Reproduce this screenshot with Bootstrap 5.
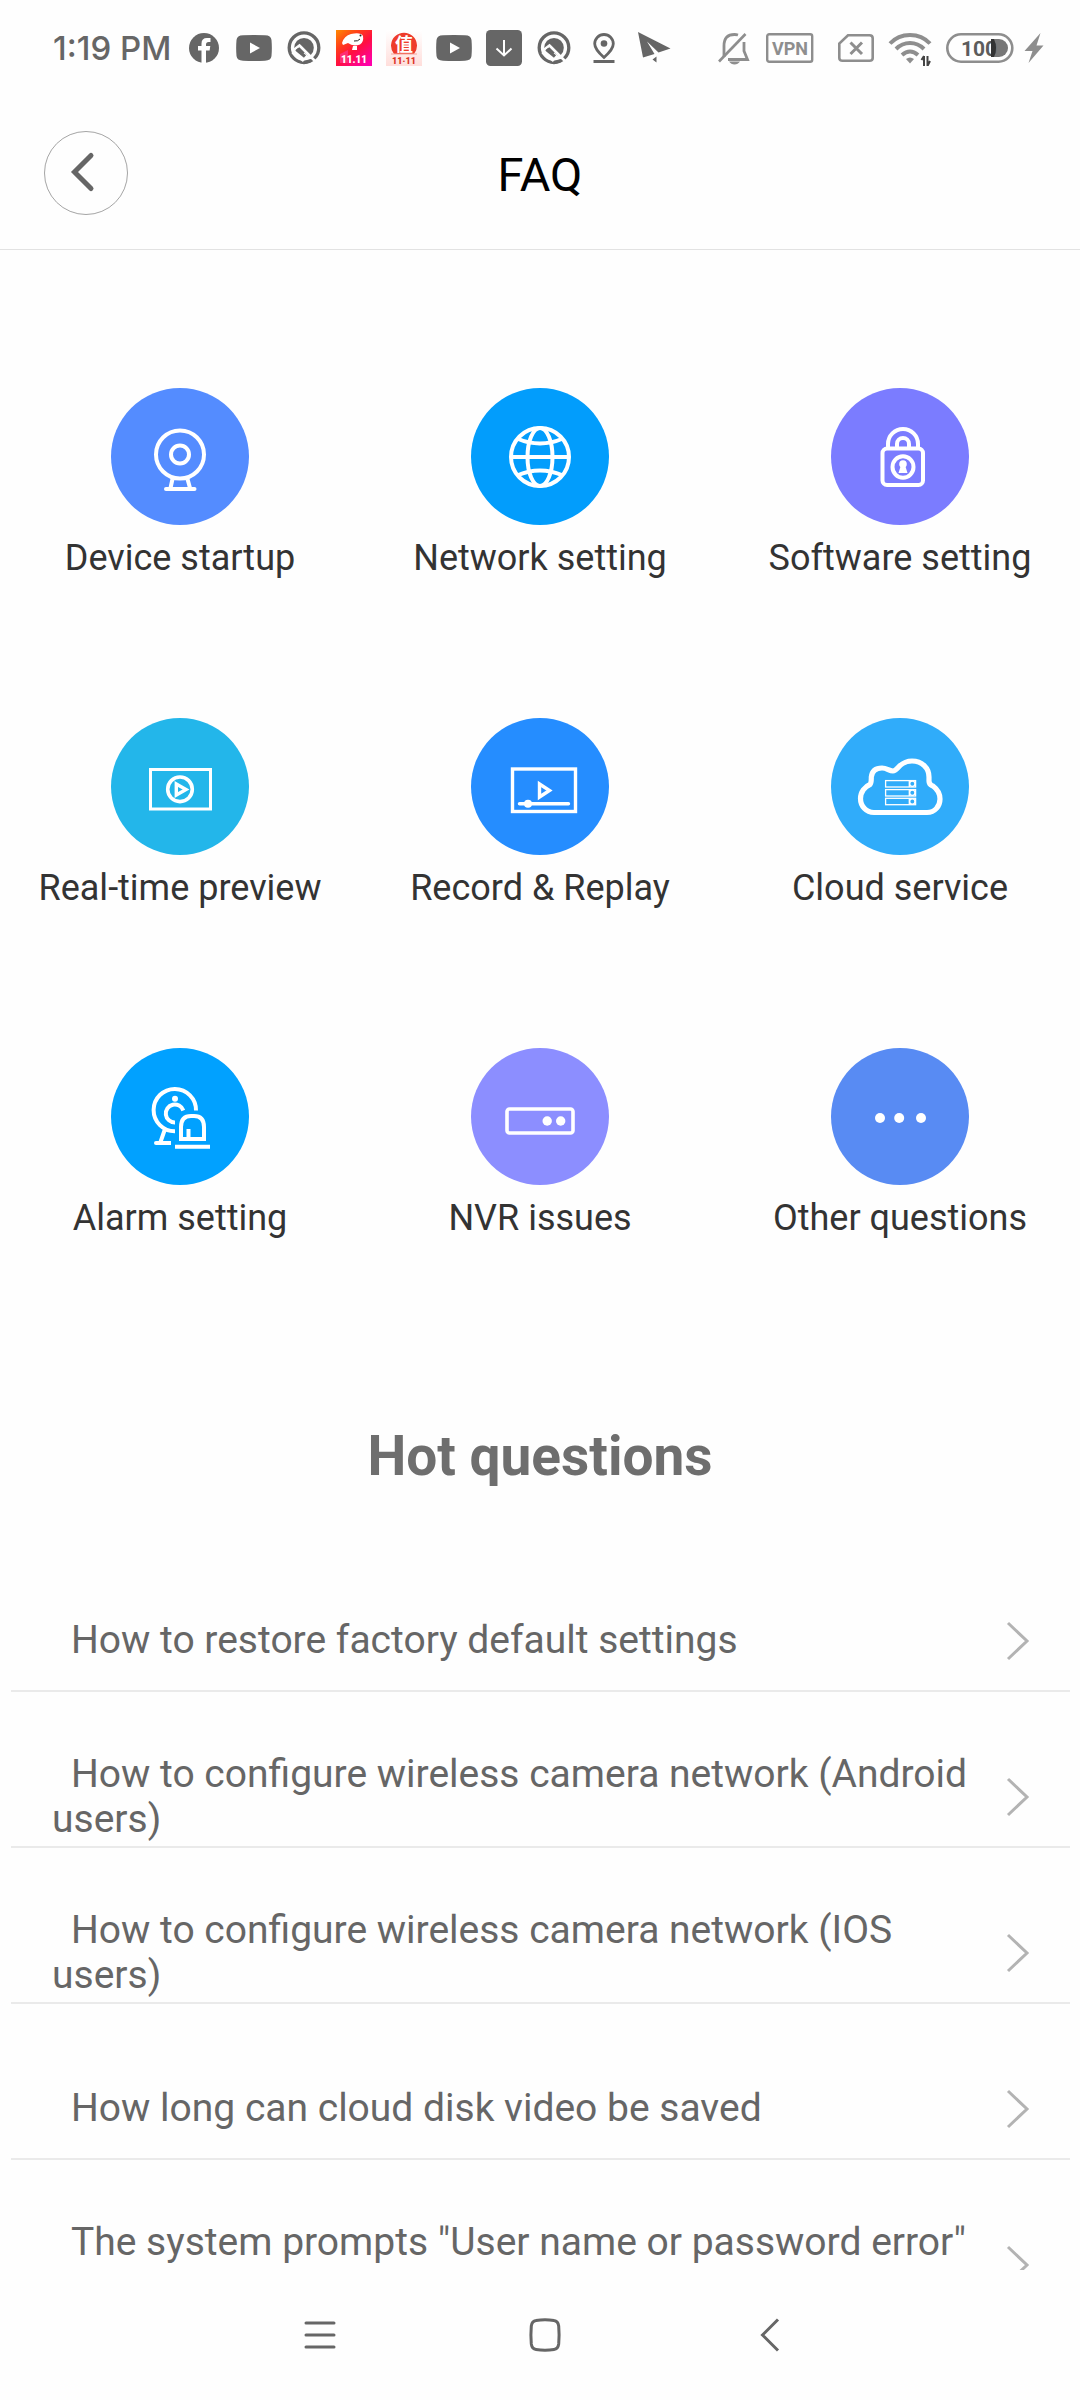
<!DOCTYPE html>
<html lang="en">
<head>
<meta charset="utf-8">
<meta name="viewport" content="width=device-width, initial-scale=1">
<title>FAQ</title>
<link href="https://cdn.jsdelivr.net/npm/bootstrap@5.3.0/dist/css/bootstrap.min.css" rel="stylesheet">
<style>
body{font-family:Roboto,"Noto Sans CJK SC",sans-serif;background:#fefefe;color:#333}
.status{height:96px;padding-left:53px;padding-right:36px;color:#666}
.clock{font:500 33px/40px Inter,Roboto,sans-serif;width:133px;white-space:nowrap}
.tray{gap:14px}
.sys{color:#8e8e8e;gap:14px}
.sim{margin-left:10px}
.topbar{height:154px;border-bottom:1px solid #e2e2e2;padding:0 44px;display:grid;grid-template-columns:84px 1fr 84px}
.back{width:84px;height:84px;border:1px solid #a5a5a5;color:#666}
.title{font-size:47px;line-height:56px;padding-top:4px;color:#000}
.topics{padding-top:138px}
.topic{height:330px;color:#333;font-size:36px;line-height:44px;gap:11px}
.heading{font-size:55px;line-height:56px;color:#6e6e6e;margin:50px 0 52px}
.questions{padding:0 10px 0 11px}
.question{height:156px;padding:55px 40px 0 41px;border-bottom:2px solid #eaeaea;color:#666;font-size:39px;line-height:45px}
.question .txt{text-indent:19px;max-width:920px}
.navkeys{height:130px;padding-left:10px;color:#666}
.navkeys .keys{width:484px}
</style>
</head>
<body>
<svg width="0" height="0" class="position-absolute" aria-hidden="true">
  <defs>
    <symbol id="tube" viewBox="0 0 36 36"><path fill="currentColor" d="M7 5.300Q18 4.500 29 5.300Q35 5.500 35.500 10Q36.200 18 35.500 26Q35 30.500 29 30.700Q18 31.500 7 30.700Q1 30.500 .5 26Q-.2 18 .5 10Q1 5.500 7 5.300Z"/><path fill="#fff" d="M14 12.500 24 18 14 23.500Z"/></symbol>
    <symbol id="quark" viewBox="0 0 36 36"><circle cx="18" cy="17.700" r="14.800" fill="none" stroke="currentColor" stroke-width="3.300"/><circle cx="18" cy="17.700" r="9.800" fill="currentColor"/><g fill="none" stroke="#fefefe"><path d="M7.500 20 13.500 15.500 29.500 31.500" stroke-width="2.600"/><path d="M7 23.500 18.500 32" stroke-width="5" transform="translate(0 -2)"/><path d="M18 26 24 31" stroke-width="4" transform="translate(-1 -2)"/></g><path d="M25 30.500 18 32.500" stroke="currentColor" stroke-width="3" fill="none"/><path d="M10.500 19.500 19 26.500" stroke="currentColor" stroke-width="3.400"/></symbol>
    <symbol id="more" viewBox="0 0 24 40"><path d="M2 2 21 20 2 38" fill="none" stroke="#b3b3b3" stroke-width="3"/></symbol>
    <clipPath id="tail"><path d="M45 0H68V36H45Z"/></clipPath>
  </defs>
</svg>
<div class="vh-100 d-flex flex-column overflow-hidden">
  <div class="status d-flex align-items-center flex-shrink-0">
    <div class="clock">1:19 PM</div>
    <div class="tray d-flex align-items-center">
      <svg width="36" height="36"><circle cx="18" cy="18" r="15" fill="currentColor"/><path d="M15.500 34V20.500H12V16H15.500V13.500Q15.500 8 21 8H24.500V12H22.500Q20 12 20 14.500V16H24.300L23.600 20.500H20V34Z" fill="#fff"/></svg>
      <svg width="36" height="36"><use href="#tube"/></svg>
      <svg width="36" height="36"><use href="#quark"/></svg>
      <svg width="36" height="36"><defs><linearGradient id="sale" x2=".8" y2="1"><stop stop-color="#ff8a00"/><stop offset=".35" stop-color="#ff3a1c"/><stop offset=".6" stop-color="#ff0f40"/><stop offset="1" stop-color="#ff00a8"/></linearGradient></defs><path fill="url(#sale)" d="M0 0H36V36H0Z"/><path d="M4 24 12 20V33H4Z" fill="#ff2d75"/><path fill="#fff" d="M6 13Q8 6 15 4Q25 2 27 6Q28 12 24 14.500Q17 17 12 13L7 15ZM17 16H21V20H19L16 20Z"/><path d="M18 11Q22 11.500 24 9" stroke="#222" fill="none"/><circle cx="24.500" cy="5.500" r="1" fill="#222"/><text x="18" y="33" text-anchor="middle" font-family="Roboto" font-size="10" font-weight="900" fill="#fff">11.11</text></svg>
      <svg width="36" height="36"><defs><linearGradient id="deal" x2="0" y2="1"><stop stop-color="#fff"/><stop offset="1" stop-color="#ffdedb"/></linearGradient></defs><path fill="url(#deal)" d="M0 0H36V36H0Z"/><path d="M8 24A13 13 0 1 1 28 24Z" fill="#ee3c2b"/><path d="M5 24H31" stroke="#f6a49b"/><text x="18" y="21" text-anchor="middle" font-family="Noto Sans CJK SC" font-size="18" font-weight="700" fill="#fff">值</text><text x="18" y="34" text-anchor="middle" font-family="Roboto" font-size="9" font-weight="900" fill="#dc3526">11·11</text></svg>
      <svg width="36" height="36"><use href="#tube"/></svg>
      <svg width="36" height="36"><rect width="36" height="36" rx="4.500" fill="currentColor"/><path d="M18 10V25M10.500 18.500 18 25.500 25.500 18.500" fill="none" stroke="#fff" stroke-width="2"/></svg>
      <svg width="36" height="36"><use href="#quark"/></svg>
      <svg width="36" height="36"><path d="M18 4.500a9.300 9.300 0 0 1 9.300 9.300C27.300 19 22 24 18 27.500 14 24 8.700 19 8.700 13.800A9.300 9.300 0 0 1 18 4.500Z" fill="none" stroke="currentColor" stroke-width="2.800"/><circle cx="18" cy="13.500" r="3.300" fill="currentColor"/><path d="M7.500 31.500H28.500" stroke="currentColor" stroke-width="3"/></svg>
      <svg width="36" height="36"><path d="M2 2 34.500 18.500 22.500 22.500 11 11.500 18.500 24 7 27.500ZM16.500 29.500 20.500 26.500V32.500Z" fill="currentColor"/></svg>
    </div>
    <div class="sys ms-auto d-flex align-items-center">
      <svg width="36" height="36"><path d="M8 27V16Q8 4.500 18.500 4.500 20.500 4.500 22 5M28 12V21L31.500 29.500H12" fill="none" stroke="currentColor" stroke-width="2.800"/><path d="M3 31.500 29.500 4" stroke="currentColor" stroke-width="2.600"/><path d="M13 31.500H24Q22 34.500 18.500 34.500T13 31.500Z" fill="currentColor"/></svg>
      <svg width="48" height="36"><rect x="1.200" y="4.200" width="45" height="27.600" rx="2" fill="none" stroke="currentColor" stroke-width="2.400"/><text x="24" y="24.500" text-anchor="middle" font-family="Roboto" font-weight="700" font-size="18" fill="currentColor">VPN</text></svg>
      <svg width="36" height="36" class="sim"><path d="M10 5.200H31.500Q34.700 5.200 34.700 8.200V28Q34.700 30.800 31.500 30.800H4.500Q1.300 30.800 1.300 28V13.500Z" fill="none" stroke="currentColor" stroke-width="2.600"/><path d="M12.500 12.500 24 24M24 12.500 12.500 24" stroke="currentColor" stroke-width="3"/></svg>
      <svg width="44" height="36"><g fill="none" stroke="currentColor" stroke-width="4"><path d="M2 13.500Q10 5 22 5T42 13.500"/><path d="M8 19Q14 13 22 13T36 19"/><path d="M14 25Q18 21.500 22 21.500T30 25"/></g><path d="M18 29Q22 26 26 29L22 33.500Z" fill="currentColor"/><path d="M36 26V36M39.500 26V36M33.500 30 36 26M39.500 36 42 31" stroke="#444" stroke-width="2"/></svg>
      <svg width="68" height="36"><rect x="1.300" y="4.300" width="65" height="27.400" rx="13.700" fill="none" stroke="currentColor" stroke-width="2.600"/><path d="M45 9H53A9 9 0 0 1 53 27H45Z" fill="#777"/><text x="15" y="26" font-family="Roboto" font-weight="700" font-size="21" fill="#5c5c5c">100</text><g clip-path="url(#tail)"><path d="M45 9H48Q52 18 48 27H45Z" fill="#333"/></g></svg>
      <svg width="16" height="36" viewBox="4 0 16 36" overflow="visible"><path d="M16.500 3 .5 21H8.500L4.500 33 19.500 15.500H12.500Z" fill="currentColor"/></svg>
    </div>
  </div>
  <header class="topbar align-items-center flex-shrink-0">
    <button type="button" class="back btn rounded-circle p-0 d-flex align-items-center justify-content-center" aria-label="Back"><svg width="82" height="82"><path d="M46 23.500 29.500 40 46 56.500" fill="none" stroke="currentColor" stroke-width="5" stroke-linecap="round"/></svg></button>
    <h1 class="title text-center fw-normal mb-0">FAQ</h1>
  </header>
  <main class="flex-grow-1 overflow-hidden">
    <nav class="topics row row-cols-3 g-0" aria-label="Topics">
      <a href="#" class="topic col d-flex flex-column align-items-center text-decoration-none"><svg width="138" height="137" fill="none" stroke="#fff" stroke-width="4"><ellipse cx="69" cy="68.500" rx="69" ry="68.500" fill="#548cff" stroke="none"/><circle cx="69" cy="66.500" r="24"/><circle cx="69" cy="66.500" r="9"/><path d="M61.500 91 59.500 100M76.500 91 79 100"/><path d="M55 101H83.500" stroke-linecap="round"/></svg>Device startup</a>
      <a href="#" class="topic col d-flex flex-column align-items-center text-decoration-none"><svg width="138" height="137" fill="none" stroke="#fff" stroke-width="4"><ellipse cx="69" cy="68.500" rx="69" ry="68.500" fill="#029dfc" stroke="none"/><circle cx="69" cy="69" r="29"/><ellipse cx="69" cy="69" rx="12.500" ry="29"/><path d="M40 69H98M46 50.500Q69 60.500 92 50.500M46 87.500Q69 77.500 92 87.500"/></svg>Network setting</a>
      <a href="#" class="topic col d-flex flex-column align-items-center text-decoration-none"><svg width="138" height="137" fill="none" stroke="#fff" stroke-width="4"><ellipse cx="69" cy="68.500" rx="69" ry="68.500" fill="#7b7cff" stroke="none"/><rect x="51.500" y="60.500" width="40.500" height="36.500" rx="4.500"/><path d="M57 60V56A15 15 0 0 1 87 56V60M66 60V56A6 6 0 0 1 78 56V60"/><ellipse cx="72" cy="79" rx="10.500" ry="10.700"/><circle cx="72" cy="76" r="3.800" fill="#fff" stroke="none"/><path d="M70 77H74L76.500 85H67.500Z" fill="#fff" stroke="none"/></svg>Software setting</a>
      <a href="#" class="topic col d-flex flex-column align-items-center text-decoration-none"><svg width="138" height="137" fill="none" stroke="#fff" stroke-width="3"><ellipse cx="69" cy="68.500" rx="69" ry="68.500" fill="#23b6ea" stroke="none"/><rect x="39.500" y="51.500" width="60" height="39.500"/><circle cx="69" cy="71.300" r="12.300" stroke-width="3.600"/><path d="M65.300 66 75 71.500 65.300 77Z" stroke-width="3.400"/></svg>Real-time preview</a>
      <a href="#" class="topic col d-flex flex-column align-items-center text-decoration-none"><svg width="138" height="137" fill="none" stroke="#fff" stroke-width="3.400"><ellipse cx="69" cy="68.500" rx="69" ry="68.500" fill="#258dff" stroke="none"/><rect x="41.500" y="51" width="63" height="42.500"/><path d="M68.500 66 78.500 72.500 68.500 79Z"/><path d="M48.500 85.700H97.500" stroke-linecap="round"/><circle cx="57" cy="85.700" r="4" fill="#fff" stroke="none"/></svg>Record &amp; Replay</a>
      <a href="#" class="topic col d-flex flex-column align-items-center text-decoration-none"><svg width="138" height="137" fill="none" stroke="#fff" stroke-width="5.200"><ellipse cx="69" cy="68.500" rx="69" ry="68.500" fill="#30acfa" stroke="none"/><path d="M43 94.500C35 94.500 29.500 88 29.500 80.500 29.500 74 34 68.500 39 66.500 40.500 65 40.300 62 40.300 59 41 53 45 50 51 50 56 50 58 53 62 53 67 53 68 43 81 43 91 43 98 50 98 59V63C98 67 100 67 102 68 106 71 109 75 109 81 109 88 104 94.500 96 94.500Z"/><g stroke-width="1.300"><rect x="54.600" y="62.600" width="30" height="6.400"/><rect x="54.600" y="71.600" width="30" height="6.400"/><rect x="54.600" y="80.300" width="30" height="6.400"/><path d="M78.300 62V69M78.300 71V78M78.300 80V87"/><circle cx="81.300" cy="65.800" r="2.600"/><circle cx="81.300" cy="74.800" r="2.600"/><circle cx="81.300" cy="83.500" r="2.600"/></g></svg>Cloud service</a>
      <a href="#" class="topic col d-flex flex-column align-items-center text-decoration-none"><svg width="138" height="137" fill="none" stroke="#fff" stroke-width="4"><ellipse cx="69" cy="68.500" rx="69" ry="68.500" fill="#01a1ff" stroke="none"/><path d="M85 62.500A21.200 21.200 0 1 0 64 83.300M72.300 62.500A9 9 0 1 0 64 74.500M54 81 49.500 94"/><path d="M45 95H60" /><circle cx="45" cy="95" r="2" fill="#fff" stroke="none"/><circle cx="64" cy="50.700" r="3" fill="#fff" stroke="none"/><path d="M70 91V79Q70 68 80 68H83Q93 68 93 79V91ZM77.500 81V91M64 98.700H99"/></svg>Alarm setting</a>
      <a href="#" class="topic col d-flex flex-column align-items-center text-decoration-none"><svg width="138" height="137" fill="none" stroke="#fff" stroke-width="3.600"><ellipse cx="69" cy="68.500" rx="69" ry="68.500" fill="#8c8eff" stroke="none"/><rect x="36" y="61" width="66" height="24" rx="2.500"/><circle cx="76.200" cy="73" r="4.700" fill="#fff" stroke="none"/><circle cx="89.700" cy="73" r="4.700" fill="#fff" stroke="none"/></svg>NVR issues</a>
      <a href="#" class="topic col d-flex flex-column align-items-center text-decoration-none"><svg width="138" height="137" fill="#fff"><ellipse cx="69" cy="68.500" rx="69" ry="68.500" fill="#588bf3"/><circle cx="49" cy="70" r="5"/><circle cx="68.200" cy="70" r="5"/><circle cx="90" cy="70" r="5"/></svg>Other questions</a>
    </nav>
    <h2 class="heading text-center fw-bold">Hot questions</h2>
    <div class="questions">
      <a href="#" class="question d-flex align-items-center justify-content-between text-decoration-none"><span class="txt d-block">How to restore factory default settings</span><svg width="24" height="40" class="flex-shrink-0"><use href="#more"/></svg></a>
      <a href="#" class="question d-flex align-items-center justify-content-between text-decoration-none"><span class="txt d-block">How to configure wireless camera network (Android users)</span><svg width="24" height="40" class="flex-shrink-0"><use href="#more"/></svg></a>
      <a href="#" class="question d-flex align-items-center justify-content-between text-decoration-none"><span class="txt d-block">How to configure wireless camera network (IOS users)</span><svg width="24" height="40" class="flex-shrink-0"><use href="#more"/></svg></a>
      <a href="#" class="question d-flex align-items-center justify-content-between text-decoration-none"><span class="txt d-block">How long can cloud disk video be saved</span><svg width="24" height="40" class="flex-shrink-0"><use href="#more"/></svg></a>
      <a href="#" class="question d-flex align-items-center justify-content-between text-decoration-none"><span class="txt d-block">The system prompts "User name or password error" after network configuration</span><svg width="24" height="40" class="flex-shrink-0"><use href="#more"/></svg></a>
    </div>
  </main>
  <footer class="navkeys d-flex align-items-center justify-content-center flex-shrink-0">
    <div class="keys d-flex align-items-center justify-content-between">
      <button type="button" class="btn border-0 p-0 d-flex" aria-label="Menu"><svg width="34" height="40"><path d="M3 8H31M3 20H31M3 32H31" stroke="#666" stroke-width="3" stroke-linecap="round"/></svg></button>
      <button type="button" class="btn border-0 p-0 d-flex" aria-label="Home"><svg width="34" height="40"><path d="M8 5.500Q17 4 26 5.500 30 6 30.700 11 31.500 20 30.700 29 30 34 26 34.500 17 36 8 34.500 4 34 3.300 29 2.500 20 3.300 11 4 6 8 5.500Z" fill="none" stroke="#666" stroke-width="3"/></svg></button>
      <button type="button" class="btn border-0 p-0 d-flex" aria-label="Back"><svg width="34" height="40"><path d="M25 4.500 9.500 20 25 35.500" fill="none" stroke="#666" stroke-width="3"/></svg></button>
    </div>
  </footer>
</div>
<script src="https://cdn.jsdelivr.net/npm/bootstrap@5.3.0/dist/js/bootstrap.bundle.min.js"></script>
</body>
</html>
